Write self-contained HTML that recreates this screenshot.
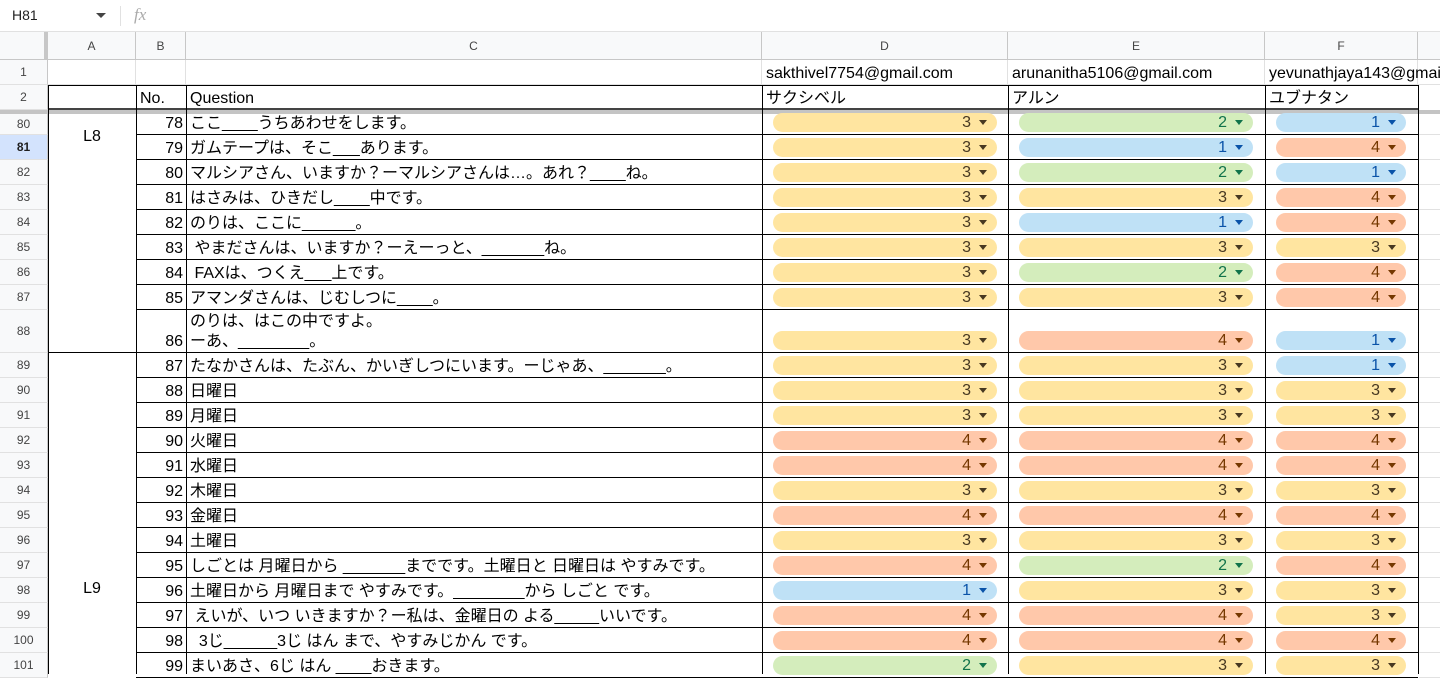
<!DOCTYPE html>
<html><head><meta charset="utf-8"><style>
*{box-sizing:border-box;margin:0;padding:0}
body{width:1440px;height:674px;overflow:hidden;background:#fff;font-family:"Liberation Sans","Noto Sans CJK JP",sans-serif;font-size:16px;color:#000;position:relative}
.abs{position:absolute}
.r{position:absolute;left:0;width:1440px}
.h{position:absolute;left:0;top:0;width:48px;height:100%;background:#f8f9fa;border-bottom:1px solid #e1e1e1;border-right:1px solid #c7c7c7;font-size:12px;color:#444;display:flex;align-items:center;justify-content:center}
.h.sel{background:#d3e3fd;font-weight:bold;color:#1f1f1f}
.b{position:absolute;left:136px;width:47px;bottom:1px;text-align:right;line-height:20px}
.c{position:absolute;left:190px;bottom:1px;white-space:nowrap;line-height:20px}
.ln{position:absolute;left:136px;width:1282px;bottom:0;height:1px;background:#000}
.g{position:absolute;left:1419px;width:21px;bottom:0;height:1px;background:#e1e1e1}
.ch{position:absolute;bottom:3px;height:19px;border-radius:10px;text-align:right;padding-right:26px;line-height:19px;font-size:16px}
.ch:after{content:"";position:absolute;right:10px;top:7px;border-left:4.5px solid transparent;border-right:4.5px solid transparent;border-top:5px solid currentColor}
.D{left:773px;width:224px}.E{left:1019px;width:234px}.F{left:1276px;width:130px}
.y{background:#ffe5a0;color:#473821}.gr{background:#d4edbc;color:#11734b}.bl{background:#bfe1f6;color:#0a53a8}.o{background:#ffc8aa;color:#753800}
.col{position:absolute;top:32px;height:28px;background:#f8f9fa;border-right:1px solid #c7c7c7;border-bottom:1px solid #c7c7c7;font-size:12px;color:#444;display:flex;align-items:center;justify-content:center}
.v{position:absolute;top:85px;width:1px;height:589px;background:#000}
</style></head><body>
<div class="abs" style="left:0;top:0;width:1440px;height:32px;border-bottom:1px solid #e1e1e1;background:#fff"></div>
<div class="abs" style="left:12px;top:7px;font-size:14px;color:#1f1f1f">H81</div>
<div class="abs" style="left:96px;top:13px;border-left:5px solid transparent;border-right:5px solid transparent;border-top:5px solid #444"></div>
<div class="abs" style="left:120px;top:6px;width:1px;height:20px;background:#e1e1e1"></div>
<div class="abs" style="left:134px;top:5px;font-family:'Liberation Serif',serif;font-style:italic;font-size:17px;color:#aaa">fx</div>
<div class="col" style="left:0;width:48px;border-right:4px solid #c7c7c7"></div>
<div class="col" style="left:48px;width:88px">A</div>
<div class="col" style="left:136px;width:50px">B</div>
<div class="col" style="left:186px;width:576px">C</div>
<div class="col" style="left:762px;width:246px">D</div>
<div class="col" style="left:1008px;width:257px">E</div>
<div class="col" style="left:1265px;width:153px">F</div>
<div class="col" style="left:1418px;width:22px;border-right:none"></div>
<div class="r" style="top:60px;height:25px">
<div class="h">1</div>
<div class="abs" style="left:48px;width:1392px;bottom:0;height:1px;background:#e1e1e1"></div>
<div class="abs" style="left:135px;top:0;width:1px;height:25px;background:#e1e1e1"></div>
<div class="abs" style="left:185px;top:0;width:1px;height:25px;background:#e1e1e1"></div>
<div class="abs" style="left:761px;top:0;width:1px;height:25px;background:#e1e1e1"></div>
<div class="abs" style="left:1007px;top:0;width:1px;height:25px;background:#e1e1e1"></div>
<div class="abs" style="left:1264px;top:0;width:1px;height:25px;background:#e1e1e1"></div>
<div class="abs" style="left:1417px;top:0;width:1px;height:25px;background:#e1e1e1"></div>
<div class="c" style="left:766px">sakthivel7754@gmail.com</div>
<div class="c" style="left:1012px">arunanitha5106@gmail.com</div>
<div class="c" style="left:1269px;width:171px;overflow:hidden">yevunathjaya143@gmail.com</div>
</div>
<div class="r" style="top:85px;height:25px">
<div class="h">2</div>
<div class="abs" style="left:48px;width:1370px;top:0;height:1px;background:#000"></div>
<div class="c" style="left:140px">No.</div>
<div class="c">Question</div>
<div class="c" style="left:766px">サクシベル</div>
<div class="c" style="left:1012px">アルン</div>
<div class="c" style="left:1269px">ユブナタン</div>
</div>
<div class="abs" style="left:48px;top:108px;width:1370px;height:2px;background:#444"></div>
<div class="abs" style="left:0;top:110px;width:1440px;height:4px;background:#c4c4c4"></div>
<div class="v" style="left:48px"></div>
<div class="v" style="left:136px"></div>
<div class="v" style="left:186px"></div>
<div class="v" style="left:762px"></div>
<div class="v" style="left:1008px"></div>
<div class="v" style="left:1265px"></div>
<div class="v" style="left:1418px"></div>

<div class="r" style="top:114px;height:21px"><div class="h">80</div><div class="ln"></div><div class="g"></div><div class="b">78</div><div class="c">ここ____うちあわせをします。</div><div class="ch D y">3</div><div class="ch E gr">2</div><div class="ch F bl">1</div></div>
<div class="r" style="top:135px;height:25px"><div class="h sel">81</div><div class="ln"></div><div class="g"></div><div class="b">79</div><div class="c">ガムテープは、そこ___あります。</div><div class="ch D y">3</div><div class="ch E bl">1</div><div class="ch F o">4</div></div>
<div class="r" style="top:160px;height:25px"><div class="h">82</div><div class="ln"></div><div class="g"></div><div class="b">80</div><div class="c">マルシアさん、いますか？ーマルシアさんは…。あれ？____ね。</div><div class="ch D y">3</div><div class="ch E gr">2</div><div class="ch F bl">1</div></div>
<div class="r" style="top:185px;height:25px"><div class="h">83</div><div class="ln"></div><div class="g"></div><div class="b">81</div><div class="c">はさみは、ひきだし____中です。</div><div class="ch D y">3</div><div class="ch E y">3</div><div class="ch F o">4</div></div>
<div class="r" style="top:210px;height:25px"><div class="h">84</div><div class="ln"></div><div class="g"></div><div class="b">82</div><div class="c">のりは、ここに______。</div><div class="ch D y">3</div><div class="ch E bl">1</div><div class="ch F o">4</div></div>
<div class="r" style="top:235px;height:25px"><div class="h">85</div><div class="ln"></div><div class="g"></div><div class="b">83</div><div class="c">&nbsp;やまださんは、いますか？ーえーっと、_______ね。</div><div class="ch D y">3</div><div class="ch E y">3</div><div class="ch F y">3</div></div>
<div class="r" style="top:260px;height:25px"><div class="h">86</div><div class="ln"></div><div class="g"></div><div class="b">84</div><div class="c">&nbsp;FAXは、つくえ___上です。</div><div class="ch D y">3</div><div class="ch E gr">2</div><div class="ch F o">4</div></div>
<div class="r" style="top:285px;height:25px"><div class="h">87</div><div class="ln"></div><div class="g"></div><div class="b">85</div><div class="c">アマンダさんは、じむしつに____。</div><div class="ch D y">3</div><div class="ch E y">3</div><div class="ch F o">4</div></div>
<div class="r" style="top:310px;height:43px"><div class="h">88</div><div class="ln" style="left:48px;width:1370px"></div><div class="g"></div><div class="b">86</div><div class="c" style="line-height:20px">のりは、はこの中ですよ。<br>ーあ、________。</div><div class="ch D y">3</div><div class="ch E o">4</div><div class="ch F bl">1</div></div>
<div class="r" style="top:353px;height:25px"><div class="h">89</div><div class="ln"></div><div class="g"></div><div class="b">87</div><div class="c">たなかさんは、たぶん、かいぎしつにいます。ーじゃあ、_______。</div><div class="ch D y">3</div><div class="ch E y">3</div><div class="ch F bl">1</div></div>
<div class="r" style="top:378px;height:25px"><div class="h">90</div><div class="ln"></div><div class="g"></div><div class="b">88</div><div class="c">日曜日</div><div class="ch D y">3</div><div class="ch E y">3</div><div class="ch F y">3</div></div>
<div class="r" style="top:403px;height:25px"><div class="h">91</div><div class="ln"></div><div class="g"></div><div class="b">89</div><div class="c">月曜日</div><div class="ch D y">3</div><div class="ch E y">3</div><div class="ch F y">3</div></div>
<div class="r" style="top:428px;height:25px"><div class="h">92</div><div class="ln"></div><div class="g"></div><div class="b">90</div><div class="c">火曜日</div><div class="ch D o">4</div><div class="ch E o">4</div><div class="ch F o">4</div></div>
<div class="r" style="top:453px;height:25px"><div class="h">93</div><div class="ln"></div><div class="g"></div><div class="b">91</div><div class="c">水曜日</div><div class="ch D o">4</div><div class="ch E o">4</div><div class="ch F o">4</div></div>
<div class="r" style="top:478px;height:25px"><div class="h">94</div><div class="ln"></div><div class="g"></div><div class="b">92</div><div class="c">木曜日</div><div class="ch D y">3</div><div class="ch E y">3</div><div class="ch F y">3</div></div>
<div class="r" style="top:503px;height:25px"><div class="h">95</div><div class="ln"></div><div class="g"></div><div class="b">93</div><div class="c">金曜日</div><div class="ch D o">4</div><div class="ch E o">4</div><div class="ch F o">4</div></div>
<div class="r" style="top:528px;height:25px"><div class="h">96</div><div class="ln"></div><div class="g"></div><div class="b">94</div><div class="c">土曜日</div><div class="ch D y">3</div><div class="ch E y">3</div><div class="ch F y">3</div></div>
<div class="r" style="top:553px;height:25px"><div class="h">97</div><div class="ln"></div><div class="g"></div><div class="b">95</div><div class="c">しごとは 月曜日から _______までです。土曜日と 日曜日は やすみです。</div><div class="ch D o">4</div><div class="ch E gr">2</div><div class="ch F o">4</div></div>
<div class="r" style="top:578px;height:25px"><div class="h">98</div><div class="ln"></div><div class="g"></div><div class="b">96</div><div class="c">土曜日から 月曜日まで やすみです。________から しごと です。</div><div class="ch D bl">1</div><div class="ch E y">3</div><div class="ch F y">3</div></div>
<div class="r" style="top:603px;height:25px"><div class="h">99</div><div class="ln"></div><div class="g"></div><div class="b">97</div><div class="c">&nbsp;えいが、いつ いきますか？ー私は、金曜日の よる_____いいです。</div><div class="ch D o">4</div><div class="ch E o">4</div><div class="ch F y">3</div></div>
<div class="r" style="top:628px;height:25px"><div class="h">100</div><div class="ln"></div><div class="g"></div><div class="b">98</div><div class="c">&nbsp;&nbsp;3じ______3じ はん まで、やすみじかん です。</div><div class="ch D o">4</div><div class="ch E o">4</div><div class="ch F o">4</div></div>
<div class="r" style="top:653px;height:25px"><div class="h">101</div><div class="ln"></div><div class="g"></div><div class="b">99</div><div class="c">まいあさ、6じ はん ____おきます。</div><div class="ch D gr">2</div><div class="ch E y">3</div><div class="ch F y">3</div></div>

<div class="abs" style="left:48px;top:128px;width:88px;text-align:center">L8</div>
<div class="abs" style="left:48px;top:580px;width:88px;text-align:center">L9</div>
</body></html>
